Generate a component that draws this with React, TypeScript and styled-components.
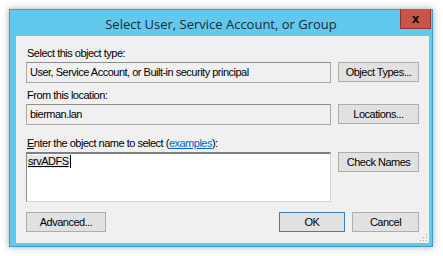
import React, { FC } from "react";
import styled, { createGlobalStyle } from "styled-components";

const Global = createGlobalStyle`
  html, body {
    margin: 0;
    padding: 0;
    background: #ffffff;
  }
  body {
    font-family: "Liberation Sans", Arial, sans-serif;
    font-size: 11px;
    letter-spacing: -0.5px;
    color: #000;
  }
`;

const Page = styled.div`
  padding: 9px;
  width: 443px;
  height: 256px;
  box-sizing: border-box;
`;

const Window = styled.div`
  width: 424px;
  height: 238px;
  box-sizing: border-box;
  background: #62c9ed;
  border: 1px solid #3a9bc8;
  box-shadow: 0 0 7px rgba(0, 0, 0, 0.35);
  display: flex;
  flex-direction: column;
`;

const TitleBar = styled.div`
  height: 27px;
  display: flex;
  align-items: center;
  justify-content: center;
  position: relative;
  font-family: "Open Sans", "Noto Sans", sans-serif;
  font-size: 13px;
  letter-spacing: 0;
  color: #1e2a33;
  padding-top: 1px;
  box-sizing: border-box;
`;

const CloseButton = styled.div`
  position: absolute;
  right: 1px;
  top: -1px;
  width: 31px;
  height: 20px;
  box-sizing: border-box;
  background: #c9544c;
  border: 1px solid #8a3530;
  border-top: none;
  display: flex;
  align-items: center;
  justify-content: center;
  font-family: "DejaVu Sans", sans-serif;
  font-weight: bold;
  font-size: 12px;
  color: #111;
  line-height: 1;
`;

const Client = styled.div`
  flex: 1;
  margin: 0 3px 3px 6px;
  background: #f0f0f0;
  padding: 11px 10px 11px 10px;
  box-sizing: border-box;
  display: flex;
  flex-direction: column;
  position: relative;
`;

const Label = styled.div<{ $gap?: number }>`
  line-height: 13px;
  height: 13px;
  margin-top: ${(p) => p.$gap ?? 0}px;
  margin-bottom: 2px;
  padding-left: 1px;
  color: #000;
  white-space: nowrap;
`;

const Row = styled.div`
  display: grid;
  grid-template-columns: 305px 81px;
  column-gap: 7px;
  align-items: start;
`;

const TextBox = styled.div`
  height: 21px;
  box-sizing: border-box;
  border: 1px solid #a9a9a9;
  border-top-color: #8e8e8e;
  background: #f0f0f0;
  padding: 0 3px;
  line-height: 19px;
  white-space: nowrap;
  overflow: hidden;
`;

const NameArea = styled.div`
  height: 50px;
  box-sizing: border-box;
  border: 1px solid #d5d5d5;
  border-top: 2px solid #7f7f7f;
  border-left: 1px solid #8a8a8a;
  background: #ffffff;
  line-height: 13px;
`;

const ResolvedName = styled.span`
  display: inline-block;
  margin-top: 1px;
  padding: 0 1px;
  background: #e6e6e6;
  text-decoration: underline;
  border-right: 1px solid #000;
`;

const Button = styled.div<{ $default?: boolean; $w?: number }>`
  width: ${(p) => (p.$w ? `${p.$w}px` : "auto")};
  height: 20px;
  box-sizing: border-box;
  background: #e1e1e1;
  border: 1px solid ${(p) => (p.$default ? "#3c7fb1" : "#adadad")};
  display: flex;
  align-items: center;
  justify-content: center;
  white-space: nowrap;
  color: #000;
`;

const Footer = styled.div`
  margin-top: 10px;
  display: flex;
  align-items: center;
  gap: 7px;
`;

const Spacer = styled.div`
  flex: 1;
`;

const Link = styled.span`
  color: #0066cc;
  text-decoration: underline;
`;

const Grip = styled.svg`
  position: absolute;
  right: 1px;
  bottom: 1px;
`;

const App: FC = () => {
  return (
    <Page>
      <Global />
      <Window>
        <TitleBar>
          Select User, Service Account, or Group
          <CloseButton>x</CloseButton>
        </TitleBar>
        <Client>
          <Label>Select this object type:</Label>
          <Row>
            <TextBox>User, Service Account, or Built-in security principal</TextBox>
            <Button $w={81}>Object Types...</Button>
          </Row>

          <Label $gap={6}>From this location:</Label>
          <Row>
            <TextBox>bierman.lan</TextBox>
            <Button $w={81}>Locations...</Button>
          </Row>

          <Label $gap={12}>
            <u>E</u>nter the object name to select (<Link>examples</Link>):
          </Label>
          <Row>
            <NameArea>
              <ResolvedName>srvADFS</ResolvedName>
            </NameArea>
            <Button $w={81}>Check Names</Button>
          </Row>

          <Footer>
            <Button $w={80}>Advanced...</Button>
            <Spacer />
            <Button $w={66} $default>OK</Button>
            <Button $w={67}>Cancel</Button>
          </Footer>

          <Grip width="8" height="8" viewBox="0 0 8 8">
            <rect x="6" y="0" width="1" height="1" fill="#a0a0a0" />
            <rect x="3" y="3" width="1" height="1" fill="#a0a0a0" />
            <rect x="6" y="3" width="1" height="1" fill="#a0a0a0" />
            <rect x="0" y="6" width="1" height="1" fill="#a0a0a0" />
            <rect x="3" y="6" width="1" height="1" fill="#a0a0a0" />
            <rect x="6" y="6" width="1" height="1" fill="#a0a0a0" />
          </Grip>
        </Client>
      </Window>
    </Page>
  );
};

export default App;
